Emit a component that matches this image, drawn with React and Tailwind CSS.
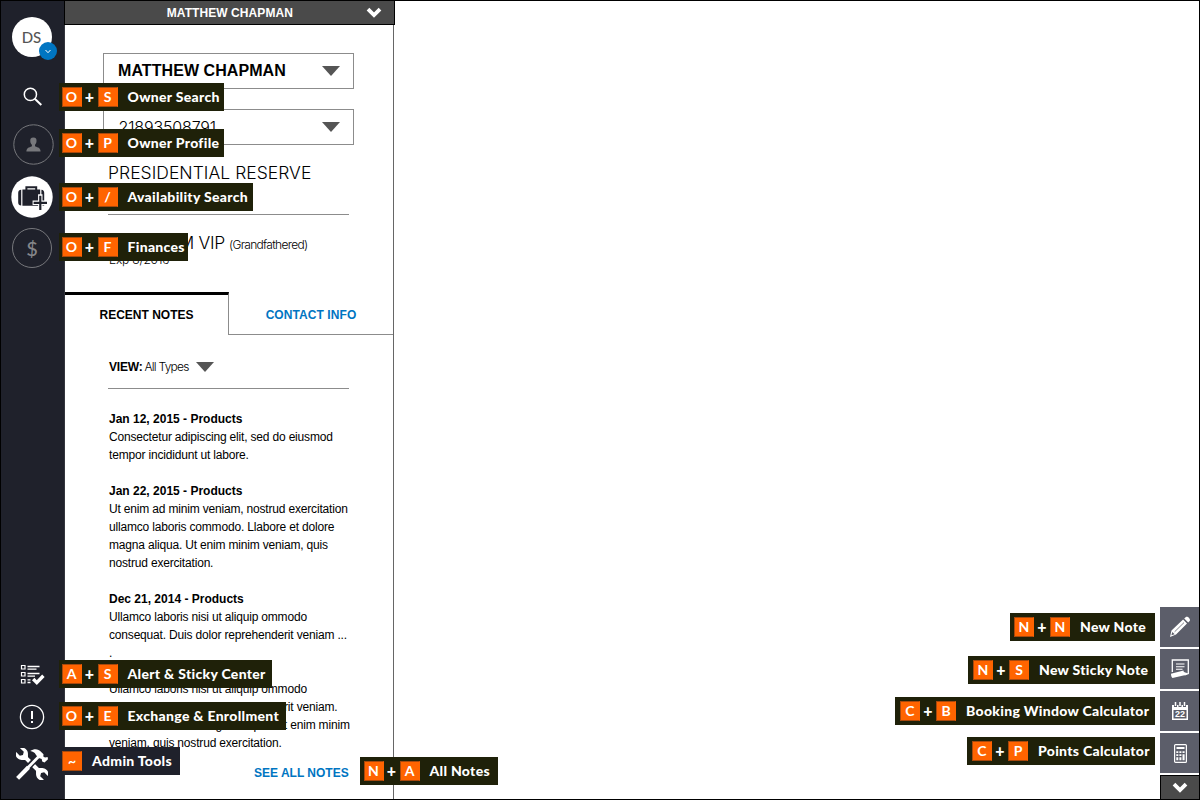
import React from "react";

const Caret = () => (
  <svg width="18" height="10" viewBox="0 0 18 10" className="shrink-0">
    <path d="M0 0H18L9 10Z" fill="#555" />
  </svg>
);

const Chevron = () => (
  <svg width="16" height="11" viewBox="0 0 16 11" className="shrink-0">
    <path d="M2 2.2L8 8L14 2.2" fill="none" stroke="#fff" strokeWidth="3.8" />
  </svg>
);

const Key = ({ children }) => (
  <span className="flex h-5 w-5 shrink-0 items-center justify-center border border-[#a8480c] border-r-[#ff6400] bg-[#ff6400] text-[14px] leading-none font-bold">
    {children}
  </span>
);

function Tag({ keys, label, place, look = "bg-[#1f2109]" }) {
  return (
    <div
      className={`absolute z-10 flex h-7 items-center font-[Lato,sans-serif] text-[14px] font-black whitespace-nowrap text-white ${look} ${place}`}
    >
      <Key>{keys[0]}</Key>
      {keys[1] && (
        <>
          <span className="w-4 text-center text-[16px] leading-none">+</span>
          <Key>{keys[1]}</Key>
        </>
      )}
      <span className="ml-[10px] leading-none tracking-[0.3px]">{label}</span>
    </div>
  );
}

const SearchIcon = () => (
  <svg width="20" height="20" viewBox="0 0 20 20" fill="none" stroke="#fff">
    <circle cx="7.4" cy="7.4" r="6.1" strokeWidth="1.5" />
    <path d="M11.8 11.8L18.3 18" strokeWidth="2" />
  </svg>
);

const PersonIcon = () => (
  <svg width="41" height="41" viewBox="0 0 41 41">
    <circle cx="20.5" cy="20.5" r="19.7" fill="none" stroke="#77787c" />
    <path d="M20.4 13.5C22.9 13.5 23.8 15.2 23.5 17.4C23.3 19.2 22.6 20.1 22 20.8V22.3C23 23.2 27.6 23.1 27.6 27.5H13.4C13.4 23.1 18 23.2 18.9 22.3V20.8C18.2 20.1 17.5 19.2 17.3 17.4C17 15.2 17.9 13.5 20.4 13.5Z" fill="#77787c" />
  </svg>
);

const LuggageIcon = () => (
  <svg width="42" height="42" viewBox="0 0 42 42">
    <circle cx="21" cy="21" r="20.7" fill="#fff" />
    <path d="M15.4 14.5V11.3H25.2V14.5" fill="none" stroke="#1f212b" strokeWidth="2" />
    <path d="M10.2 13.8C8 13.8 7.2 15.2 7.2 17V26.5C7.2 28.2 8.2 29.6 10.2 29.6ZM11.4 13.6H29.2V29.8H11.4ZM30.4 13.8C32.4 13.8 33.2 15.2 33.2 17V29.4H30.4Z" fill="#1f212b" />
    <path d="M29.3 18.2V34.6M21.6 26.8H37.2" stroke="#fff" strokeWidth="4.4" />
    <path d="M29.3 19.8V34M22.6 26.8H36" stroke="#1f212b" strokeWidth="2.2" />
  </svg>
);

const ListIcon = () => (
  <svg width="25" height="22" viewBox="0 0 25 22" fill="none" stroke="#fff">
    <path d="M1.5 1.5H5V5H1.5ZM1.5 8.5H5V12H1.5ZM1.5 15.5H5V19H1.5Z" strokeWidth="1.2" />
    <path d="M7.5 2.5H19.5M7.5 5.2H16.5M7.5 9.5H19.5M7.5 12.2H15M7.5 15.9H10.5M7.5 18.5H10.5" strokeWidth="1.3" />
    <path d="M13.2 15L16.8 18.6L23.4 11.8" strokeWidth="3.4" />
  </svg>
);

const AlertIcon = () => (
  <svg width="26" height="26" viewBox="0 0 26 26" fill="none" stroke="#fff">
    <circle cx="13" cy="13" r="11.6" strokeWidth="1.3" />
    <path d="M13 7V15M13 17V19" strokeWidth="2" />
  </svg>
);

const ToolsIcon = () => (
  <svg width="32" height="32" viewBox="0 0 32 32">
    <g transform="rotate(-45 16 16)" fill="#fff">
      <path d="M13.9 7L18.1 7V25H13.9Z" />
      <path d="M13.2 -3.6V1.6L16 3.2L18.8 1.6V-3.6C21.5 -2.5 22.8 -.1 22 3C21.3 5.7 19.2 6.8 17.8 8.6H14.2C12.8 6.8 10.7 5.7 10 3C9.2 -.1 10.5 -2.5 13.2 -3.6Z" />
      <path d="M13.2 35.6V30.4L16 28.8L18.8 30.4V35.6C21.5 34.5 22.8 32.1 22 29C21.3 26.3 19.2 25.2 17.8 23.4H14.2C12.8 25.2 10.7 26.3 10 29C9.2 32.1 10.5 34.5 13.2 35.6Z" />
    </g>
    <path d="M6 25.8L22.5 8.2" stroke="#1f212b" strokeWidth="6" />
    <path d="M1.6 30.4L12.5 19.2" stroke="#fff" strokeWidth="4.2" />
    <path d="M10.8 20.8L24 7.3" stroke="#fff" strokeWidth="2.8" />
    <path d="M14.2 3.1C18.4 .3 22.2 .8 25.2 3.9L27.5 6.3L27.3 8.6L29 9.6L31.6 8.9L32 11.2L28.5 14.4L26.2 13.6L25.7 11.1L22.1 9.8L19.7 6.5C18.6 4.6 17 3.5 14.2 3.1Z" fill="#fff" />
  </svg>
);

const PencilIcon = () => (
  <svg width="22" height="22" viewBox="0 0 22 22">
    <path d="M1 21L2.5 14.5L14.1 3.5L18 7.4L7 18.5ZM15.2 2.5L17.2 .8C18.8 .2 21.5 2.6 20.9 4.7L19.2 6.4Z" fill="#fff" />
    <path d="M3.3 15.9L5.7 18.2L2.4 19.3Z" fill="#5c5e6a" />
    <path d="M5.6 15.8L15 6.6" stroke="#5c5e6a" strokeWidth=".8" />
  </svg>
);

const StickyIcon = () => (
  <svg width="20" height="20" viewBox="0 0 20 20">
    <path d="M2.3 13V1H18.3V14.5L14.6 16" fill="none" stroke="#fff" strokeWidth="1.3" />
    <path d="M6 5H14.5M6 7.7H14.5M6 10.3H12.5" stroke="#fff" strokeWidth="1.1" />
    <path d="M1 14.7L13.6 11.6C12.8 12.9 15.5 13.8 18 14.2L15.6 16L2.5 19C1.4 18 1 16.4 1 14.7Z" fill="#fff" />
  </svg>
);

const CalendarIcon = () => (
  <span className="relative block h-[18px] w-4">
    <svg width="16" height="18" viewBox="0 0 16 18">
      <path d="M0 3H2V5H5V3H6.5V5H9.5V3H11V5H14V3H16V18H0Z" fill="#fff" />
      <path d="M3.5 0V4M8 0V4M12.5 0V4" stroke="#fff" strokeWidth="1.5" />
      <path d="M1.5 8H14.5V16.5H1.5Z" fill="#5c5e6a" />
    </svg>
    <span className="absolute inset-x-0 top-[8px] text-center text-[9px] leading-[9px] font-bold text-white">22</span>
  </span>
);

const CalculatorIcon = () => (
  <svg width="13" height="19" viewBox="0 0 13 19">
    <rect x=".6" y=".6" width="11.8" height="17.8" rx="1" fill="none" stroke="#fff" strokeWidth="1.2" />
    <path d="M2.5 3H10.5V5H2.5ZM2.3 7.3H4.3V9H2.3ZM5.4 7.3H7.4V9H5.4ZM8.5 7.3H10.6V9H8.5ZM2.3 10.3H4.3V12H2.3ZM5.4 10.3H7.4V12H5.4ZM8.5 10.3H10.6V16.2H8.5ZM2.3 13.3H4.3V16.2H2.3ZM5.4 13.3H7.4V16.2H5.4Z" fill="#fff" />
  </svg>
);

const NavItem = ({ box, icon, children }) => (
  <div className={`relative flex w-[63px] shrink-0 items-center justify-center ${box}`}>
    {icon}
    {children}
  </div>
);

function Sidebar() {
  return (
    <aside className="flex w-[63px] shrink-0 flex-col bg-[#1f212b]">
      <NavItem
        box="mt-4 h-10 pr-[2px]"
        icon={
          <span className="relative flex size-10 items-center justify-center rounded-full bg-white font-[Lato,sans-serif] text-[15px] font-medium text-[#555]">
            DS
            <span className="absolute top-[25px] left-[27px] flex size-[18px] items-center justify-center rounded-full bg-[#0075c2]">
              <svg width="6" height="5" viewBox="0 0 6 5" fill="none" stroke="#fff">
                <path d="M.5 1L3 3.7L5.5 1" />
              </svg>
            </span>
          </span>
        }
      />
      <NavItem box="mt-[26px] h-7" icon={<SearchIcon />}>
        <Tag keys={["O", "S"]} label="Owner Search" place="top-0 left-[58px] w-[165px] pl-[2.5px]" />
      </NavItem>
      <NavItem box="mt-[13px] h-[41px] pl-px" icon={<PersonIcon />}>
        <Tag keys={["O", "P"]} label="Owner Profile" place="top-[5px] left-[58px] w-[165px] pl-[2.5px]" />
      </NavItem>
      <NavItem box="mt-[11px] h-[42px] pr-px" icon={<LuggageIcon />}>
        <Tag keys={["O", "/"]} label="Availability Search" place="top-[7px] left-[58px] w-[194px] pl-[2.5px]" />
      </NavItem>
      <NavItem
        box="mt-[10px] h-10 pr-px"
        icon={
          <span className="flex size-10 items-center justify-center rounded-full border border-[#77787c] font-[Lato,sans-serif] text-[20px] font-medium text-[#85868a]">
            $
          </span>
        }
      >
        <Tag keys={["O", "F"]} label="Finances" place="top-[5px] left-[58px] w-[129px] pl-[2.5px]" />
      </NavItem>
      <NavItem box="mt-auto h-7 pr-px" icon={<ListIcon />}>
        <Tag keys={["A", "S"]} label="Alert & Sticky Center" place="top-[-1px] left-[58px] w-[213px] pl-[2.5px]" />
      </NavItem>
      <NavItem box="mt-[14px] h-7 pr-px" icon={<AlertIcon />}>
        <Tag keys={["O", "E"]} label="Exchange & Enrollment" place="top-[-1px] left-[58px] w-[227px] pl-[2.5px]" />
      </NavItem>
      <NavItem box="mt-[17px] mb-[19px] h-8 pr-px" icon={<ToolsIcon />}>
        <Tag keys={["~"]} label="Admin Tools" look="bg-[#1f212b]" place="top-[-1px] left-[58px] w-[121px] pl-[3px]" />
      </NavItem>
    </aside>
  );
}

const notes = [
  {
    title: "Jan 12, 2015 - Products",
    lines: ["Consectetur adipiscing elit, sed do eiusmod", "tempor incididunt ut labore."],
  },
  {
    title: "Jan 22, 2015 - Products",
    lines: [
      "Ut enim ad minim veniam, nostrud exercitation",
      "ullamco laboris commodo. Llabore et dolore",
      "magna aliqua. Ut enim minim veniam, quis",
      "nostrud exercitation.",
    ],
  },
  {
    title: "Dec 21, 2014 - Products",
    lines: ["Ullamco laboris nisi ut aliquip ommodo", "consequat. Duis dolor reprehenderit veniam ...", "."],
    tight: true,
  },
  {
    title: "Dec 12, 2014 - Products",
    lines: [
      "Ullamco laboris nisi ut aliquip ommodo",
      "consequat. Duis dolor reprehenderit veniam.",
      "Llabore et dolore magna aliqua. Ut enim minim",
      "veniam, quis nostrud exercitation.",
    ],
  },
];

function OwnerPanel() {
  return (
    <section className="relative flex w-[331px] shrink-0 flex-col">
      <header className="mt-[-1px] flex h-[25px] shrink-0 items-center justify-end border border-black bg-[#4a4a4a] pr-3 text-[12px] font-bold text-white">
        <span className="mr-[73px] tracking-[0.08px]">MATTHEW CHAPMAN</span>
        <Chevron />
      </header>
      <div className="-mb-px flex w-[330px] grow flex-col border-x border-b border-[#666] border-l-[#33353d]">
        <div className="ml-[38px] flex w-[251px] flex-col pt-7">
          <div className="flex h-9 items-center justify-between border border-[#8c8c8c] pr-[13px] pb-px pl-[14px] text-[16px] font-bold">
            <span className="tracking-[0.07px]">MATTHEW CHAPMAN</span>
            <Caret />
          </div>
          <div className="mt-5 flex h-9 items-center justify-between border border-[#8c8c8c] pr-[13px] pl-[14.5px] font-[Inter,sans-serif] text-[16px] font-light tracking-[-0.15px]">
            <span>21893508791</span>
            <Caret />
          </div>
        </div>
        <div className="ml-[43px] w-[241px] font-[Inter,sans-serif] font-light">
          <div className="mt-[15px] h-[55px] border-b border-[#8c8c8c] pt-[1px] text-[17.5px] leading-6 tracking-[0.03px] whitespace-nowrap">
            PRESIDENTIAL RESERVE
          </div>
          <div className="mt-4 flex items-baseline text-[17.5px] leading-6 tracking-[-0.3px] whitespace-nowrap">
            <span className="flex w-[117px] justify-end">PLATINUM VIP</span>
            <span className="pl-1 text-[12px] tracking-[-0.7px]">(Grandfathered)</span>
          </div>
          <div className="mt-[-3px] pl-px text-[12px] leading-3 tracking-[-0.2px]">Exp 8/2016</div>
        </div>
        <nav className="mt-[26px] flex h-[43px] shrink-0 text-[12px] font-bold">
          <div className="flex w-[164px] items-center justify-center border-t-[3px] border-r border-t-black border-r-[#8c8c8c]">
            RECENT NOTES
          </div>
          <div className="flex grow items-center justify-center border-b border-[#8c8c8c] text-[#0075c2]">
            <span className="mt-[3px] tracking-[0.08px]">CONTACT INFO</span>
          </div>
        </nav>
        <div className="ml-[43px] flex h-[54px] w-[241px] shrink-0 items-center border-b border-[#8c8c8c] pt-[10px] pl-px text-[12px]">
          <b className="mr-[2px] tracking-[-0.2px]">VIEW:</b>
          <span className="mr-[7px] font-[Inter,sans-serif] font-light tracking-[-0.75px]">All Types</span>
          <Caret />
        </div>
        <div className="mt-[21px] ml-[44px] w-[241px] text-[12px] leading-[18px] whitespace-nowrap">
          {notes.map((n) => (
            <article key={n.title} className={n.tight ? "" : "mb-[18px]"}>
              <h3 className="font-bold">{n.title}</h3>
              {n.lines.map((l) => (
                <p key={l} className="tracking-[-0.18px]">{l}</p>
              ))}
            </article>
          ))}
        </div>
        <a className="mt-[-6px] ml-[189px] text-[12px] leading-[18px] font-bold whitespace-nowrap text-[#0075c2]">SEE ALL NOTES</a>
      </div>
      <Tag keys={["N", "A"]} label="All Notes" place="top-[756px] left-[296px] w-[138px] pl-[3.5px]" />
    </section>
  );
}

const tools = [
  { icon: <PencilIcon />, keys: ["N", "N"], label: "New Note", place: "top-[6px] right-[44px] w-[145px] pl-1" },
  { icon: <StickyIcon />, keys: ["N", "S"], label: "New Sticky Note", place: "top-[7px] right-[44px] w-[187px] pl-[5px]" },
  { icon: <CalendarIcon />, keys: ["C", "B"], label: "Booking Window Calculator", place: "top-[6px] right-[44px] w-[260px] pl-[5px]" },
  { icon: <CalculatorIcon />, keys: ["C", "P"], label: "Points Calculator", place: "top-1 right-[44px] w-[188px] pl-[5px]" },
];

function ToolDock() {
  return (
    <div className="flex w-[39px] flex-col justify-end gap-[2px]">
      {tools.map((t) => (
        <div key={t.label} className="relative flex h-10 items-center justify-center bg-[#5c5e6a] pl-px">
          {t.icon}
          <Tag keys={t.keys} label={t.label} place={t.place} />
        </div>
      ))}
      <div className="flex h-6 items-center justify-center border-t border-l border-black bg-[#4a4a4a]">
        <Chevron />
      </div>
    </div>
  );
}

export default function App() {
  return (
    <div className="flex h-[800px] w-[1200px] overflow-hidden border border-black bg-white font-['Liberation_Sans',Arial,sans-serif] text-black">
      <Sidebar />
      <OwnerPanel />
      <main className="flex grow justify-end">
        <ToolDock />
      </main>
    </div>
  );
}
